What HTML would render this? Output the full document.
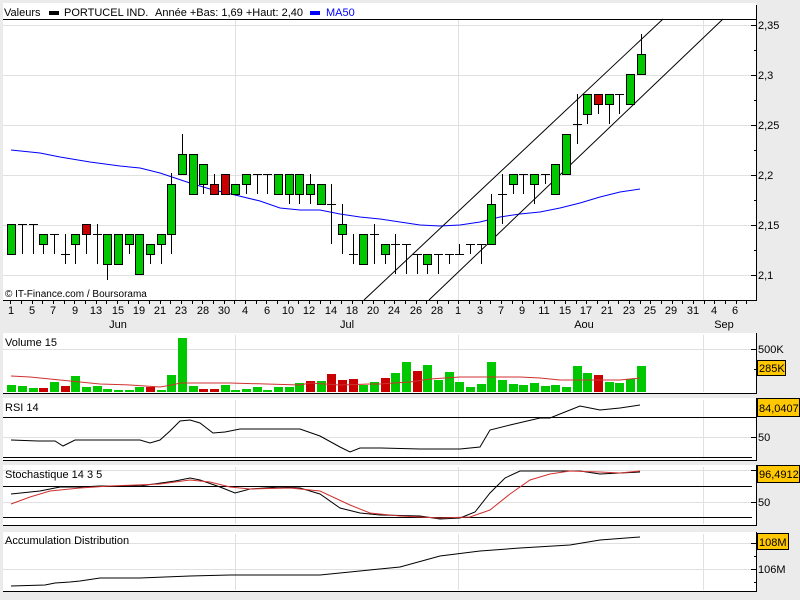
<!DOCTYPE html>
<html><head><meta charset="utf-8"><style>
html,body{margin:0;padding:0;background:#ebebeb;}
svg{display:block;font-family:"Liberation Sans",sans-serif;}
</style></head><body>
<svg width="800" height="600" viewBox="0 0 800 600" xmlns="http://www.w3.org/2000/svg">
<rect width="800" height="600" fill="#ebebeb"/>
<!-- panels -->
<rect x="3" y="3" width="753" height="297" fill="#fff"/>
<rect x="3" y="333" width="753" height="60" fill="#fff"/>
<rect x="3" y="398" width="753" height="62" fill="#fff"/>
<rect x="3" y="465" width="753" height="60" fill="#fff"/>
<rect x="3" y="532" width="753" height="60" fill="#fff"/>
<g stroke="#e0e0e0" stroke-width="1" shape-rendering="crispEdges">
<path d="M3 25.5H752M3 75.5H752M3 125.5H752M3 175.5H752M3 225.5H752M3 275.5H752"/>
<path d="M235.5 20V300M458.5 20V300M703.5 20V300"/>
<path d="M235.5 335V392M458.5 335V392M703.5 335V392M3 349.5H752"/>
<path d="M235.5 400V459M458.5 400V459M703.5 400V459M3 437.5H752"/>
<path d="M235.5 467V524M458.5 467V524M703.5 467V524M3 470.5H752M3 502.5H752"/>
<path d="M235.5 534V590M458.5 534V590M703.5 534V590M3 543.5H752M3 569.5H752"/>
</g>
<g stroke="#000" stroke-width="1" shape-rendering="crispEdges" fill="none">
<path d="M3 19.5H756M756.5 5V300.5M3 300.5H757"/>
<path d="M3 393.5H757M756.5 333V393"/>
<path d="M3 417.5H752M3 457.5H752M3 460.5H757M756.5 398V460"/>
<path d="M3 486.5H752M3 517.5H752M3 525.5H757M756.5 465V525"/>
<path d="M3 591.5H757M756.5 532V592"/>
<path d="M751 25.5h5M754 50.5h2M751 75.5h5M754 100.5h2M751 125.5h5M754 150.5h2M751 175.5h5M754 200.5h2M751 225.5h5M754 250.5h2M751 275.5h5"/>
<path d="M751 349.5h5M754 369.5h2M751 417.5h5M751 437.5h5M751 470.5h5M751 502.5h5M751 543.5h5M754 556.5h2M751 569.5h5M754 582.5h2"/>
<path d="M10.5 301v3M21.5 301v3M32.5 301v3M42.5 301v3M53.5 301v3M64.5 301v3M74.5 301v3M85.5 301v3M96.5 301v3M106.5 301v3M117.5 301v3M128.5 301v3M138.5 301v3M149.5 301v3M160.5 301v3M170.5 301v3M181.5 301v3M192.5 301v3M202.5 301v3M213.5 301v3M224.5 301v3M234.5 301v3M245.5 301v3M256.5 301v3M266.5 301v3M277.5 301v3M288.5 301v3M298.5 301v3M309.5 301v3M320.5 301v3M330.5 301v3M341.5 301v3M352.5 301v3M362.5 301v3M373.5 301v3M384.5 301v3M394.5 301v3M405.5 301v3M416.5 301v3M426.5 301v3M437.5 301v3M448.5 301v3M458.5 301v3M469.5 301v3M480.5 301v3M490.5 301v3M501.5 301v3M512.5 301v3M522.5 301v3M533.5 301v3M544.5 301v3M554.5 301v3M565.5 301v3M576.5 301v3M586.5 301v3M597.5 301v3M608.5 301v3M618.5 301v3M629.5 301v3M640.5 301v3M650.5 301v3M661.5 301v3M672.5 301v3M682.5 301v3M693.5 301v3M704.5 301v3M714.5 301v3M725.5 301v3M736.5 301v3M746.5 301v3"/>
</g>
<!-- header -->
<g font-size="11" fill="#000">
<text x="4" y="16">Valeurs</text>
<rect x="49" y="11" width="10" height="4"/>
<text x="64" y="16">PORTUCEL IND.</text>
<text x="155" y="16">Année +Bas: 1,69 +Haut: 2,40</text>
<rect x="310" y="11" width="10" height="4" fill="#0000ff"/>
<text x="326" y="16" fill="#0000ff">MA50</text>
</g>
<!-- MA50 -->
<polyline fill="none" stroke="#0000ff" stroke-width="1" points="11,150 40,153 60,157 90,162 120,166 140,168 160,173 175,178 190,183 210,189 235,195 260,201 280,208 300,210 320,210 340,214 360,217 380,219 400,222 420,225 440,226 460,225 480,222 500,217 520,214 540,212 560,208 580,203 600,197 620,192 640,189"/>
<!-- channel -->
<g stroke="#000" stroke-width="1" fill="none">
<line x1="364" y1="300" x2="663" y2="19"/>
<line x1="429" y1="300" x2="723" y2="19"/>
</g>
<!-- wicks -->
<path stroke="#000" stroke-width="1" fill="none" shape-rendering="crispEdges" d="
M22.5 224V254M18 224.5h9M33.5 224V254M29 224.5h9M43.5 244V254M54.5 234V254M50 234.5h9M65.5 234V264M61 254.5h9M75.5 244V264M86.5 234V254M97.5 224V264M93 234.5h9M107.5 264V280M129.5 244V254M150.5 254V264M161.5 244V264
M171.5 173V254M182.5 134V154M203.5 184V194M214.5 174V184M246.5 184V194M257.5 174V194M253 174.5h9M267.5 174V194M263 174.5h9M289.5 194V204M299.5 194V204M310.5 174V204M331.5 184V244M327 204.5h9M342.5 204V254M353.5 234V264M349 254.5h9M374.5 224V264M370 234.5h9M385.5 254V264
M395.5 234V274M391 244.5h9M406.5 244V274M402 244.5h9M417.5 254V274M413 254.5h9M427.5 264V274M438.5 254V274M434 254.5h9M449.5 254V264M445 254.5h9M459.5 244V254M455 254.5h9M470.5 244V254M466 244.5h9M481.5 244V264M477 244.5h9M491.5 194V204M502.5 174V224M498 194.5h9M513.5 184V194M523.5 174V194M519 174.5h9M534.5 184V204M545.5 174V184M541 174.5h9M577.5 94V144M573 124.5h9M587.5 114V124M598.5 104V114M609.5 104V124M619.5 94V114M615 94.5h9M641.5 34V54"/>
<!-- bodies -->
<g stroke="#000" stroke-width="1" shape-rendering="crispEdges" fill="#00c800">
<rect x="7.5" y="224.5" width="8" height="30"/>
<rect x="39.5" y="234.5" width="8" height="10"/>
<rect x="71.5" y="234.5" width="8" height="10"/>
<rect x="82.5" y="224.5" width="8" height="10" fill="#c80000"/>
<rect x="103.5" y="234.5" width="8" height="30"/>
<rect x="114.5" y="234.5" width="8" height="30"/>
<rect x="125.5" y="234.5" width="8" height="10"/>
<rect x="135.5" y="234.5" width="8" height="40"/>
<rect x="146.5" y="244.5" width="8" height="10"/>
<rect x="157.5" y="234.5" width="8" height="10"/>
<rect x="167.5" y="184.5" width="8" height="50"/>
<rect x="178.5" y="154.5" width="8" height="20"/>
<rect x="189.5" y="154.5" width="8" height="40"/>
<rect x="199.5" y="164.5" width="8" height="20"/>
<rect x="210.5" y="184.5" width="8" height="10" fill="#c80000"/>
<rect x="221.5" y="174.5" width="8" height="20" fill="#c80000"/>
<rect x="231.5" y="184.5" width="8" height="10"/>
<rect x="242.5" y="174.5" width="8" height="10"/>
<rect x="274.5" y="174.5" width="8" height="20"/>
<rect x="285.5" y="174.5" width="8" height="20"/>
<rect x="295.5" y="174.5" width="8" height="20"/>
<rect x="306.5" y="184.5" width="8" height="10"/>
<rect x="317.5" y="184.5" width="8" height="20"/>
<rect x="338.5" y="224.5" width="8" height="10"/>
<rect x="359.5" y="234.5" width="8" height="30"/>
<rect x="381.5" y="244.5" width="8" height="10"/>
<rect x="423.5" y="254.5" width="8" height="10"/>
<rect x="487.5" y="204.5" width="8" height="40"/>
<rect x="509.5" y="174.5" width="8" height="10"/>
<rect x="530.5" y="174.5" width="8" height="10"/>
<rect x="551.5" y="164.5" width="8" height="30"/>
<rect x="562.5" y="134.5" width="8" height="40"/>
<rect x="583.5" y="94.5" width="8" height="20"/>
<rect x="594.5" y="94.5" width="8" height="10" fill="#c80000"/>
<rect x="605.5" y="94.5" width="8" height="10"/>
<rect x="626.5" y="74.5" width="8" height="30"/>
<rect x="637.5" y="54.5" width="8" height="20"/>
</g>
<text x="5" y="297" font-size="10">© IT-Finance.com / Boursorama</text>
<!-- right labels main -->
<g font-size="11" fill="#000">
<text x="758" y="29">2,35</text><text x="758" y="79">2,3</text><text x="758" y="129">2,25</text><text x="758" y="179">2,2</text><text x="758" y="229">2,15</text><text x="758" y="279">2,1</text>
</g>
<!-- date labels -->
<g font-size="11" fill="#000" text-anchor="middle">
<text x="11" y="314">1</text><text x="32" y="314">5</text><text x="53" y="314">7</text><text x="75" y="314">9</text><text x="96" y="314">13</text><text x="118" y="314">15</text><text x="139" y="314">19</text><text x="160" y="314">21</text><text x="181" y="314">23</text><text x="203" y="314">28</text><text x="224" y="314">30</text><text x="245" y="314">4</text><text x="267" y="314">6</text><text x="288" y="314">10</text><text x="309" y="314">12</text><text x="331" y="314">14</text><text x="352" y="314">18</text><text x="373" y="314">20</text><text x="394" y="314">24</text><text x="416" y="314">26</text><text x="437" y="314">28</text><text x="458" y="314">1</text><text x="480" y="314">3</text><text x="501" y="314">7</text><text x="522" y="314">9</text><text x="544" y="314">11</text><text x="565" y="314">15</text><text x="586" y="314">17</text><text x="607" y="314">21</text><text x="629" y="314">23</text><text x="650" y="314">25</text><text x="671" y="314">29</text><text x="693" y="314">31</text><text x="714" y="314">4</text><text x="735" y="314">6</text>
<text x="118" y="328">Jun</text><text x="347" y="328">Jul</text><text x="584" y="328">Aou</text><text x="724" y="328">Sep</text>
</g>
<!-- volume -->
<text x="5" y="346" font-size="11">Volume 15</text>
<g fill="#00c800">
<rect x="7" y="385" width="9" height="7"/><rect x="18" y="386" width="9" height="6"/><rect x="29" y="388" width="9" height="4"/><rect x="39" y="388" width="9" height="4" fill="#c80000"/><rect x="50" y="382" width="9" height="10"/><rect x="61" y="386" width="9" height="6" fill="#c80000"/><rect x="71" y="376" width="9" height="16"/><rect x="82" y="387" width="9" height="5"/><rect x="93" y="386" width="9" height="6"/><rect x="103" y="389" width="9" height="3"/><rect x="114" y="390" width="9" height="2"/><rect x="125" y="390" width="9" height="2"/><rect x="135" y="387" width="9" height="5"/><rect x="146" y="387" width="9" height="5" fill="#c80000"/><rect x="157" y="390" width="9" height="2"/><rect x="167" y="375" width="9" height="17"/><rect x="178" y="338" width="9" height="54"/><rect x="189" y="386" width="9" height="6"/><rect x="199" y="389" width="9" height="3" fill="#c80000"/><rect x="210" y="389" width="9" height="3" fill="#c80000"/><rect x="221" y="385" width="9" height="7"/><rect x="231" y="390" width="9" height="2"/><rect x="242" y="389" width="9" height="3"/><rect x="253" y="387" width="9" height="5"/><rect x="263" y="390" width="9" height="2"/><rect x="274" y="387" width="9" height="5"/><rect x="285" y="387" width="9" height="5"/><rect x="295" y="383" width="9" height="9"/><rect x="306" y="381" width="9" height="11" fill="#c80000"/><rect x="317" y="381" width="9" height="11"/><rect x="327" y="374" width="9" height="18" fill="#c80000"/><rect x="338" y="380" width="9" height="12" fill="#c80000"/><rect x="349" y="379" width="9" height="13" fill="#c80000"/><rect x="359" y="385" width="9" height="7"/><rect x="370" y="382" width="9" height="10"/><rect x="381" y="378" width="9" height="14" fill="#c80000"/><rect x="391" y="373" width="9" height="19"/><rect x="402" y="362" width="9" height="30"/><rect x="413" y="371" width="9" height="21" fill="#c80000"/><rect x="423" y="365" width="9" height="27"/><rect x="434" y="380" width="9" height="12"/><rect x="445" y="372" width="9" height="20"/><rect x="455" y="382" width="9" height="10"/><rect x="466" y="387" width="9" height="5"/><rect x="477" y="384" width="9" height="8"/><rect x="487" y="362" width="9" height="30"/><rect x="498" y="380" width="9" height="12"/><rect x="509" y="384" width="9" height="8"/><rect x="519" y="385" width="9" height="7"/><rect x="530" y="383" width="9" height="9"/><rect x="541" y="386" width="9" height="6"/><rect x="551" y="385" width="9" height="7"/><rect x="562" y="387" width="9" height="5"/><rect x="573" y="366" width="9" height="26"/><rect x="583" y="373" width="9" height="19"/><rect x="594" y="375" width="9" height="17" fill="#c80000"/><rect x="605" y="382" width="9" height="10"/><rect x="615" y="383" width="9" height="9"/><rect x="626" y="379" width="9" height="13"/><rect x="637" y="366" width="9" height="26"/>
</g>
<polyline fill="none" stroke="#d03030" stroke-width="1" points="11,376 30,377 50,379 70,381 100,384 130,385 160,387 172,385 180,383 230,383 300,385 310,383 340,385 370,384 380,384 410,382 430,379 460,377 520,377 540,378 560,380 600,380 620,380 640,378"/>
<text x="758" y="353" font-size="11">500K</text>
<rect x="757.5" y="360.5" width="28" height="15" fill="#ffc800" stroke="#000"/>
<text x="759" y="372" font-size="11">285K</text>
<!-- RSI -->
<text x="5" y="411" font-size="11">RSI 14</text>
<polyline fill="none" stroke="#000" stroke-width="1" points="11,440 38,441 55,441 63,446 75,440 140,440 150,443 160,440 170,431 180,421 190,420 200,423 213,433 225,432 240,429 300,429 320,436 340,447 350,452 360,448 380,448 420,449 460,449 480,447 490,430 510,425 540,418 550,418 570,410 580,406 590,408 600,410 620,408 640,405"/>
<rect x="757.5" y="398.5" width="42" height="18" fill="#ffc800" stroke="#000"/>
<text x="759" y="412" font-size="11">84,0407</text>
<text x="758" y="441" font-size="11">50</text>
<!-- Stoch -->
<text x="5" y="478" font-size="11">Stochastique 14 3 5</text>
<polyline fill="none" stroke="#000" stroke-width="1" points="11,494 40,491 60,487 80,487 100,486 140,486 175,481 190,478 200,480 220,487 235,493 250,489 280,487 300,488 320,494 340,508 360,513 380,515 420,516 440,519 460,518 475,512 490,493 505,478 520,471 560,471 580,471 600,474 620,473 640,472"/>
<polyline fill="none" stroke="#d03030" stroke-width="1" points="11,504 30,497 50,491 80,488 110,486 160,484 190,480 210,482 230,487 250,489 290,488 320,491 350,505 370,513 400,516 440,518 470,517 490,510 510,494 530,480 550,474 570,471 600,472 620,473 640,471"/>
<rect x="757.5" y="465.5" width="42" height="17" fill="#ffc800" stroke="#000"/>
<text x="759" y="478" font-size="11">96,4912</text>
<text x="758" y="506" font-size="11">50</text>
<!-- AD -->
<text x="5" y="544" font-size="11">Accumulation Distribution</text>
<polyline fill="none" stroke="#000" stroke-width="1" points="11,586 45,585 55,583 70,582 80,581 100,578 140,578 190,576 230,575 320,575 350,572 400,567 440,556 480,551 520,548 570,545 600,540 640,537"/>
<rect x="757.5" y="533.5" width="31" height="16" fill="#ffc800" stroke="#000"/>
<text x="759" y="546" font-size="11">108M</text>
<text x="758" y="573" font-size="11">106M</text>
</svg>
</body></html>
